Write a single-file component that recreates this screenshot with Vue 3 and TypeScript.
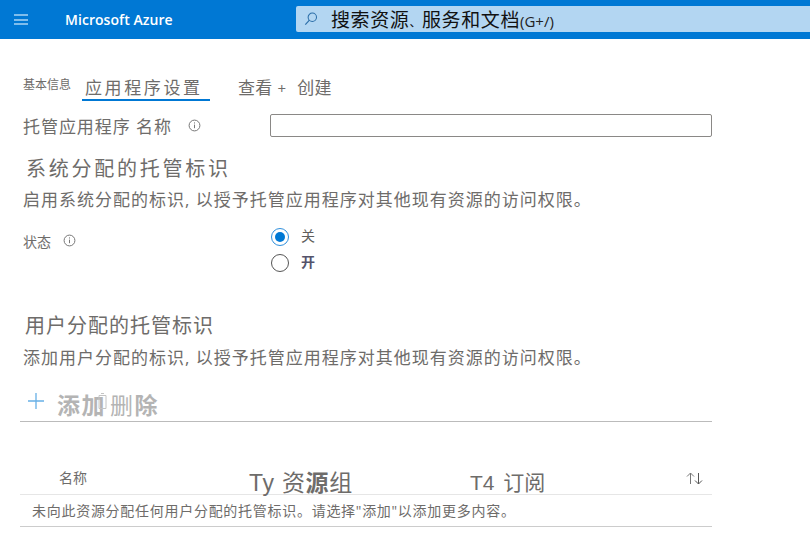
<script setup lang="ts">
const tabs: string[] = ['应用程序设置', '查看 + 创建']
</script>

<template>
  <div class="page">
    <header class="topbar">
      <button class="menu" aria-label="菜单"><span></span><span></span><span></span></button>
      <div class="brand">Microsoft Azure</div>
      <div class="search">
        <svg class="search-icon" width="14" height="14" viewBox="0 0 16 16" fill="none">
          <circle cx="9.5" cy="6" r="4.8" stroke="#2b6ea8" stroke-width="1.2" />
          <path d="M6.2 9.3 1.5 14.5" stroke="#2b6ea8" stroke-width="1.3" />
        </svg>
        <span class="search-text">搜索资源<span class="mark">、</span>服务和文档<small>(G+/)</small></span>
      </div>
    </header>

    <main class="content">
      <nav class="tabs">
        <span class="tab-basic">基本信息</span>
        <span class="tab-active">{{ tabs[0] }}</span>
        <span class="tab-review">查看<i>+</i>创建</span>
      </nav>

      <div class="name-row">
        <label class="name-label">托管应用程序 名称
          <svg class="info" width="13" height="13" viewBox="0 0 13 13" fill="none">
            <circle cx="6.5" cy="6.5" r="5.4" stroke="#777" />
            <path d="M6.5 5.6v3.6M6.5 3.4v1.1" stroke="#777" />
          </svg>
        </label>
        <div class="text-input"></div>
      </div>

      <h2 class="h-system">系统分配的托管标识</h2>
      <p class="desc">启用系统分配的标识, 以授予托管应用程序对其他现有资源的访问权限。</p>

      <div class="status-row">
        <div class="status-label">状态
          <svg class="info" width="13" height="13" viewBox="0 0 13 13" fill="none">
            <circle cx="6.5" cy="6.5" r="5.4" stroke="#777" />
            <path d="M6.5 5.6v3.6M6.5 3.4v1.1" stroke="#777" />
          </svg>
        </div>
        <div class="radios">
          <div class="radio-line"><span class="radio on"></span><span class="off-label">关</span></div>
          <div class="radio-line second"><span class="radio"></span><span class="on-label">开</span></div>
        </div>
      </div>

      <h2 class="h-user">用户分配的托管标识</h2>
      <p class="desc desc-user">添加用户分配的标识, 以授予托管应用程序对其他现有资源的访问权限。</p>

      <div class="toolbar">
        <svg width="16" height="16" viewBox="0 0 16 16" fill="none">
          <path d="M8 0v16M0 8h16" stroke="#67b0e6" stroke-width="1.3" />
        </svg>
        <span class="add">添加</span>
        <svg class="ghost" width="9" height="16" viewBox="0 0 9 16" fill="none">
          <path d="M1 2.5h7v13H1zM3 .5h3" stroke="#c4c4c4" />
        </svg>
        <span class="remove">删<b>除</b></span>
      </div>

      <div class="table-head">
        <span class="col-name">名称</span>
        <span class="col-group">Ty 资<b>源</b>组</span>
        <span class="col-sub">T4 订阅</span>
        <svg class="sort" width="17" height="13" viewBox="0 0 17 13" fill="none">
          <path d="M4.5 12V1M1 4.5 4.5 1 8 4.5" stroke="#777" />
          <path d="M12.5 1v11M9 8.5l3.5 3.5L16 8.5" stroke="#555" />
        </svg>
      </div>
      <div class="table-empty">未向此资源分配任何用户分配的托管标识。请选择"添加"以添加更多内容。</div>
    </main>
  </div>
</template>

<style>
html, body { margin: 0; background: #fff; }
</style>

<style scoped>
.page {
  width: 810px;
  height: 559px;
  overflow: hidden;
  font-family: "Open Sans", "Noto Sans CJK SC", sans-serif;
  color: #6e6c6a;
}
.topbar {
  height: 39px;
  background: #0078d4;
  display: flex;
  align-items: center;
}
.menu {
  width: 14px;
  height: 11px;
  margin-left: 14px;
  padding: 0;
  border: 0;
  background: none;
  display: flex;
  flex-direction: column;
  justify-content: space-between;
}
.menu span { display: block; height: 2px; background: #7fbdec; }
.brand {
  margin-left: 37px;
  width: 231px;
  color: #fff;
  font-size: 14px;
  font-weight: 600;
  letter-spacing: 0.05px;
}
.search {
  width: 514px;
  height: 26px;
  margin-top: -1px;
  background: #b3d6f2;
  border-radius: 2px 0 0 2px;
  display: flex;
  align-items: center;
}
.search-icon { margin-left: 8px; }
.search-text {
  margin-left: 13px;
  font-size: 19px;
  letter-spacing: 0.6px;
  color: #111;
  white-space: nowrap;
}
.mark { font-size: 12px; }
.search-text small {
  font-size: 15px;
  letter-spacing: 0;
  color: #222;
  font-family: "Open Sans", sans-serif;
}

.content { position: relative; padding: 0 98px 0 23px; }

.tabs { display: flex; align-items: flex-start; height: 62px; padding-top: 37px; box-sizing: border-box; }
.tab-basic { font-size: 12px; line-height: 17px; }
.tab-active {
  margin-left: 11px;
  width: 128px;
  height: 25px;
  box-sizing: border-box;
  padding-left: 3px;
  border-bottom: 2px solid #0078d4;
  font-size: 17px;
  line-height: 23px;
  letter-spacing: 2.6px;
  white-space: nowrap;
}
.tab-review {
  margin-left: 28px;
  font-size: 17px;
  line-height: 23px;
  letter-spacing: 0.2px;
}
.tab-review i { font-style: normal; font-size: 15px; margin: 0 11px 0 5px; }

.name-row { display: flex; align-items: center; height: 23px; margin-top: 13px; }
.name-label { width: 247px; font-size: 17px; letter-spacing: 0.95px; display: flex; align-items: center; white-space: pre; }
.name-label .info { margin-left: 11px; }
.info { margin-left: 16px; }
.text-input {
  width: 442px;
  height: 23px;
  box-sizing: border-box;
  border: 1px solid #8a8886;
  border-radius: 2px;
}

h2 { margin: 0; font-weight: 400; white-space: nowrap; }
.h-system { margin: 19px 0 0 3px; font-size: 20px; line-height: 26px; letter-spacing: 2.75px; }
.desc { margin: 7px 0 0; font-size: 17px; line-height: 22px; letter-spacing: 1px; white-space: nowrap; }

.status-row { display: flex; margin-top: 19px; }
.status-label { width: 248px; font-size: 14px; line-height: 20px; display: flex; align-items: flex-start; margin-top: 2px; }
.status-label .info { margin: 2px 0 0 12px; }
.radios { display: flex; flex-direction: column; margin-top: -3px; }
.radio-line { display: flex; align-items: center; height: 20px; font-size: 14px; }
.radio-line.second { margin-top: 6px; }
.radio {
  width: 18px;
  height: 18px;
  box-sizing: border-box;
  border: 1px solid #555;
  border-radius: 50%;
  margin-right: 12px;
  display: flex;
  align-items: center;
  justify-content: center;
}
.radio.on { border-color: #2f8fdc; }
.radio.on::after { content: ""; width: 10px; height: 10px; border-radius: 50%; background: #0078d4; }
.off-label { color: #605e5c; margin-top: -4px; }
.on-label { color: #55536b; font-weight: 700; margin-top: -4px; }

.h-user { margin: 40px 0 0 2px; font-size: 20px; line-height: 26px; letter-spacing: 1px; }
.desc-user { margin-top: 8px; }

.toolbar {
  width: 692px;
  margin: 22px 0 0 -3px;
  height: 31px;
  box-sizing: border-box;
  border-bottom: 1px solid #bbb;
  display: flex;
  align-items: flex-start;
  color: #b4b4b4;
  font-size: 23px;
  line-height: 28px;
  padding-left: 8px;
}
.toolbar > svg:first-child { margin-top: 2px; }
.add { margin-left: 13px; font-weight: 700; letter-spacing: 1.5px; }
.ghost { margin: 2px 0 0 -8px; }
.remove { margin-left: 3px; letter-spacing: 1.5px; font-weight: 400; }
.remove b { font-weight: 700; }

.table-head {
  width: 692px;
  margin: 37px 0 0 -3px;
  height: 36px;
  padding-top: 8px;
  box-sizing: border-box;
  border-bottom: 1px solid #e6e6e6;
  display: flex;
  align-items: flex-start;
  position: relative;
}
.col-name { margin-left: 39px; width: 190px; font-size: 14px; line-height: 22px; }
.col-group { width: 221px; font-size: 23px; line-height: 32px; font-family: "Liberation Sans", "Noto Sans CJK SC", sans-serif; white-space: nowrap; letter-spacing: 0.6px; word-spacing: 0.5px; }
.col-group b { font-weight: 700; }
.col-sub { font-size: 21px; line-height: 32px; font-family: "Liberation Sans", "Noto Sans CJK SC", sans-serif; white-space: nowrap; word-spacing: 3px; }
.sort { position: absolute; right: 9px; top: 13px; }
.table-empty {
  width: 692px;
  margin-left: -3px;
  height: 32px;
  box-sizing: border-box;
  padding-left: 12px;
  border-bottom: 1px solid #ccc;
  font-size: 14px;
  line-height: 31px;
  letter-spacing: 0.72px;
  white-space: nowrap;
}
</style>
